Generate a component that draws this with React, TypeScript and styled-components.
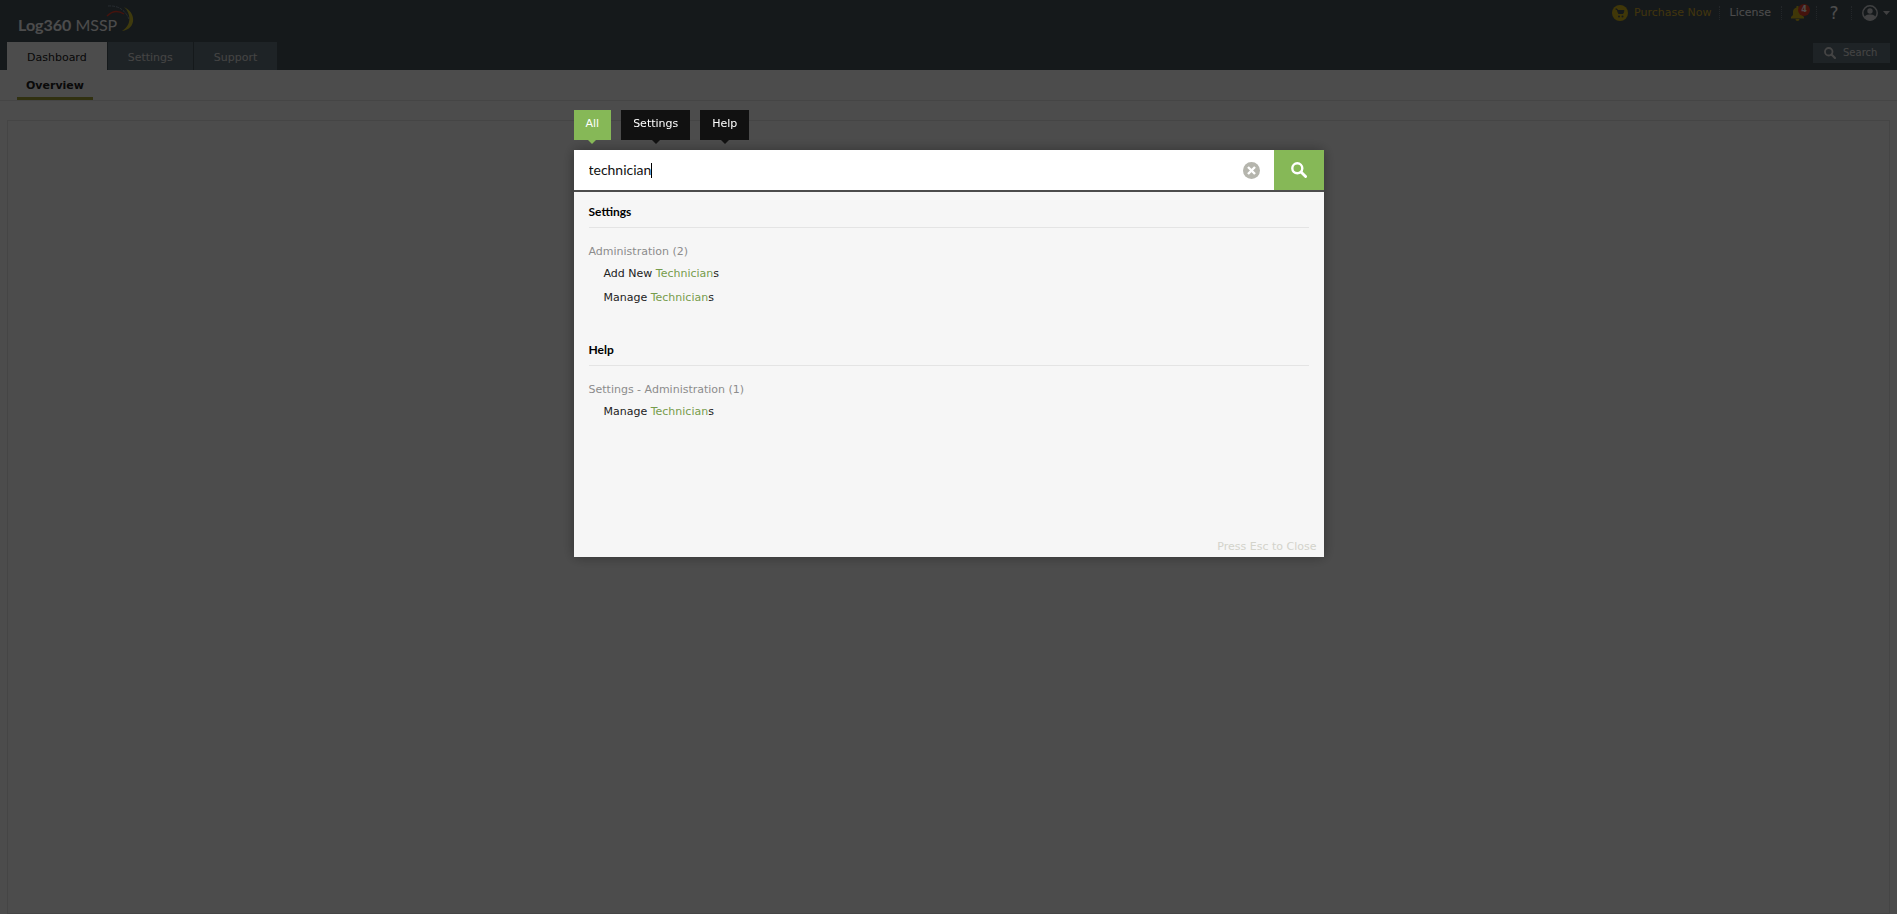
import React, { useState } from "react";
import styled, { createGlobalStyle } from "styled-components";

const GlobalStyle = createGlobalStyle`
  *, *::before, *::after { box-sizing: border-box; }
  body {
    margin: 0;
    background: #fff;
    font-family: "DejaVu Sans", Verdana, sans-serif;
    font-size: 11px;
    line-height: 16px;
    color: #333;
  }
  button, input { font: inherit; }
  a { text-decoration: none; color: inherit; }
`;

const Page = styled.div`
  min-height: 100vh;
  display: flex;
  flex-direction: column;
`;

const Header = styled.header`
  height: 70px;
  display: flex;
  justify-content: space-between;
  background: #47545c;
`;

const HeaderSide = styled.div<{ $end?: boolean }>`
  display: flex;
  flex-direction: column;
  justify-content: space-between;
  align-items: ${(p) => (p.$end ? "flex-end" : "flex-start")};
  padding: 0 7px;
`;

const Brand = styled.a`
  display: flex;
  align-items: flex-end;
  height: 35px;
  padding-left: 11px;
  font-family: Lato, sans-serif;
  font-size: 16px;
  line-height: 20px;
  color: #fff;
  white-space: pre;
`;

const BrandArc = styled.svg`
  width: 30px;
  height: 28px;
  margin: 0 0 2px -11px;
`;

const MainTabs = styled.nav`
  display: flex;
  gap: 1px;
`;

const MainTab = styled.a<{ $active?: boolean }>`
  height: 28px;
  padding: 2px 20px 0;
  line-height: 28px;
  color: ${(p) => (p.$active ? "#222" : "#e4e4e4")};
  background: ${(p) => (p.$active ? "#fff" : "#67757f")};
`;

const Utilities = styled.div`
  display: flex;
  align-items: center;
  height: 26px;
`;

const Utility = styled.button<{ $tone?: string }>`
  display: flex;
  align-items: center;
  height: 14px;
  gap: 6px;
  padding: 0 10px;
  border: 0;
  border-left: 1px dotted #75808a;
  background: none;
  color: ${(p) => p.$tone ?? "#fff"};
  &:first-child { border-left: 0; padding-right: 7px; }
  &:nth-child(3) { width: 35px; padding-left: 8px; }
  &:last-child { padding-right: 0; gap: 5px; }
`;

const BellWrap = styled.span`
  position: relative;
  display: flex;
`;

const Badge = styled.span`
  position: absolute;
  top: -2px;
  left: 8px;
  width: 12px;
  height: 12px;
  border-radius: 50%;
  background: #e8402c;
  color: #fff;
  font-size: 8px;
  line-height: 12px;
  text-align: center;
  font-weight: bold;
`;

const HelpMark = styled.span`
  width: 14px;
  font-size: 17px;
  text-align: center;
`;

const HeaderSearch = styled.button`
  display: flex;
  align-items: center;
  gap: 7px;
  width: 77px;
  height: 20px;
  margin-bottom: 7px;
  padding: 0 0 0 11px;
  border: 0;
  background: #67757f;
  color: #e4e4e4;
  font-size: 10px;
`;

const SubNav = styled.nav`
  display: flex;
  height: 31px;
  padding: 0 17px;
  border-bottom: 1px solid #e8e8e8;
`;

const SubTab = styled.a`
  height: 30px;
  padding: 2px 9px 0;
  border-bottom: 3px solid #a3a63a;
  line-height: 28px;
  font-weight: bold;
  color: #222;
`;

const Content = styled.main`
  flex: 1;
  margin: 19px 7px 0;
  border: 1px solid #e8e8e8;
`;

const Overlay = styled.div`
  position: fixed;
  inset: 0;
  padding-top: 110px;
  background: rgba(0, 0, 0, 0.7);
`;

const Dialog = styled.section`
  width: 750px;
  max-width: 100%;
  margin: 0 auto;
`;

const Scopes = styled.div`
  display: flex;
  gap: 10px;
  height: 40px;
`;

const Scope = styled.button<{ $active?: boolean }>`
  position: relative;
  height: 30px;
  padding: 0 12px 2px;
  border: 0;
  background: ${(p) => (p.$active ? "#86b857" : "#111")};
  color: #fff;
  &::after {
    content: "";
    position: absolute;
    top: 100%;
    left: 50%;
    margin-left: -4px;
    border: 4px solid transparent;
    border-bottom: 0;
    border-top-color: ${(p) => (p.$active ? "#86b857" : "#111")};
  }
`;

const Popup = styled.div`
  box-shadow: 0 0 12px rgba(0, 0, 0, 0.35);
`;

const SearchForm = styled.form`
  display: flex;
  align-items: center;
  height: 42px;
  padding-left: 15px;
  border-bottom: 2px solid #4c4c4c;
  background: #fff;
`;

const Field = styled.label`
  flex: 1;
  display: flex;
  align-items: center;
`;

const SearchInput = styled.input`
  field-sizing: content;
  max-width: 640px;
  height: 24px;
  padding: 0 0 2px;
  border: 0;
  outline: 0;
  caret-color: transparent;
  background: none;
  font-family: Lato, sans-serif;
  font-size: 14px;
  color: #111;
`;

const Caret = styled.span`
  width: 1px;
  height: 15px;
  background: #000;
`;

const ClearButton = styled.button`
  display: flex;
  padding: 0;
  margin-right: 14px;
  border: 0;
  background: none;
`;

const SubmitButton = styled.button`
  display: flex;
  align-items: center;
  justify-content: center;
  width: 50px;
  height: 40px;
  padding: 0;
  border: 0;
  background: #86b857;
`;

const Results = styled.div`
  display: flex;
  flex-direction: column;
  min-height: 365px;
  padding: 0 15px;
  background: #f6f6f6;
`;

const Group = styled.section`
  height: 138px;
`;

const GroupTitle = styled.h2`
  height: 36px;
  margin: 0 0 16px;
  padding-top: 4px;
  border-bottom: 1px solid #e4e4e4;
  font-family: Lato, sans-serif;
  font-size: 12px;
  line-height: 32px;
  color: #000;
`;

const Category = styled.h3`
  margin: 0;
  font-size: 11px;
  font-weight: normal;
  color: #8c8c8c;
`;

const ResultList = styled.ul`
  margin: 0;
  padding: 2px 0 0 15px;
  list-style: none;
`;

const ResultItem = styled.li`
  height: 24px;
  line-height: 24px;
  color: #222;
`;

const Match = styled.span`
  color: #769c4c;
`;

const CloseHint = styled.p`
  margin: auto -8px 2px auto;
  color: #d3d3cb;
`;

const SearchIcon = ({ size, color }: { size: number; color: string }) => (
  <svg width={size} height={size} viewBox="0 0 16 16" fill="none" stroke={color} aria-hidden="true">
    <circle cx="6.3" cy="6.3" r="5" strokeWidth="2.4" />
    <path d="M10 10l4.600 4.600" strokeWidth="2.8" strokeLinecap="round" />
  </svg>
);

const groups = [
  { title: "Settings", category: "Administration (2)", items: ["Add New", "Manage"] },
  { title: "Help", category: "Settings - Administration (1)", items: ["Manage"] },
];

export default function App() {
  const [query, setQuery] = useState("technician");
  const [scope, setScope] = useState("All");
  return (
    <>
      <GlobalStyle />
      <Page>
        <Header>
          <HeaderSide>
            <Brand href="#">
              <b>Log360</b> MSSP
              <BrandArc viewBox="0 0 30 28" fill="none" aria-hidden="true">
                <path d="M1 11Q9 3 18 9" stroke="#e8402c" strokeWidth="1.4" />
                <path d="M2 1Q17 0 23 14" stroke="#8595a3" strokeWidth="1" strokeDasharray="3 1" />
                <path d="M18 2C31 8 30 24 16 26C25 21 26 9 18 2Z" fill="#d2c42e" />
              </BrandArc>
            </Brand>
            <MainTabs>
              <MainTab href="#" $active>Dashboard</MainTab>
              <MainTab href="#">Settings</MainTab>
              <MainTab href="#">Support</MainTab>
            </MainTabs>
          </HeaderSide>
          <HeaderSide $end>
            <Utilities>
              <Utility $tone="#d9b02c">
                <svg width="16" height="16" viewBox="0 0 16 16" aria-hidden="true">
                  <circle cx="8" cy="8" r="8" fill="#d6b81c" />
                  <path d="M3.500 4h1.500l1.500 4.500h4.500l1-3H5.500" fill="#47545c" stroke="#47545c" />
                  <circle cx="7" cy="11.500" r="1" fill="#47545c" />
                  <circle cx="10.500" cy="11.500" r="1" fill="#47545c" />
                </svg>
                Purchase Now
              </Utility>
              <Utility>License</Utility>
              <Utility aria-label="Notifications">
                <BellWrap>
                  <svg width="15" height="15" viewBox="0 0 15 15" fill="#d6b81c" aria-hidden="true">
                    <path d="M6.500 0h2v1.500C11 2 12 4 12 6v3l2 2v1.500H1V11l2-2V6c0-2 1-4 3.500-4.500zM5.500 13h4a2 2 0 0 1-4 0z" />
                  </svg>
                  <Badge>4</Badge>
                </BellWrap>
              </Utility>
              <Utility aria-label="Help"><HelpMark>?</HelpMark></Utility>
              <Utility aria-label="Account">
                <svg width="16" height="16" viewBox="0 0 16 16" aria-hidden="true">
                  <circle cx="8" cy="8" r="7.200" fill="none" stroke="#d5d8da" strokeWidth="1.500" />
                  <circle cx="8" cy="6" r="2.700" fill="#d5d8da" />
                  <path d="M2.500 13C3 10 5 9.500 8 9.500s5 .5 5.500 3.500Q8 18 2.500 13z" fill="#d5d8da" />
                </svg>
                <svg width="7" height="4" viewBox="0 0 7 4" aria-hidden="true">
                  <path d="M0 0h7L3.500 4z" fill="#d5d8da" />
                </svg>
              </Utility>
            </Utilities>
            <HeaderSearch>
              <SearchIcon size={12} color="#e4e4e4" />
              Search
            </HeaderSearch>
          </HeaderSide>
        </Header>
        <SubNav>
          <SubTab href="#">Overview</SubTab>
        </SubNav>
        <Content />
      </Page>
      <Overlay>
        <Dialog role="dialog" aria-label="Search">
          <Scopes>
            {["All", "Settings", "Help"].map((name) => (
              <Scope key={name} $active={scope === name} onClick={() => setScope(name)}>
                {name}
              </Scope>
            ))}
          </Scopes>
          <Popup>
            <SearchForm onSubmit={(e) => e.preventDefault()}>
              <Field>
                <SearchInput aria-label="Search" value={query} onChange={(e) => setQuery(e.target.value)} />
                <Caret />
              </Field>
              <ClearButton type="button" aria-label="Clear" onClick={() => setQuery("")}>
                <svg width="17" height="17" viewBox="0 0 17 17" aria-hidden="true">
                  <circle cx="8.500" cy="8.500" r="8.500" fill="#b5b5ad" />
                  <path d="M5 5l7 7M12 5l-7 7" stroke="#fff" strokeWidth="2.400" />
                </svg>
              </ClearButton>
              <SubmitButton aria-label="Run search">
                <SearchIcon size={16} color="#fff" />
              </SubmitButton>
            </SearchForm>
            <Results>
              {groups.map((g) => (
                <Group key={g.title}>
                  <GroupTitle>{g.title}</GroupTitle>
                  <Category>{g.category}</Category>
                  <ResultList>
                    {g.items.map((item) => (
                      <ResultItem key={item}>
                        <a href="#">{item} <Match>Technician</Match>s</a>
                      </ResultItem>
                    ))}
                  </ResultList>
                </Group>
              ))}
              <CloseHint>Press Esc to Close</CloseHint>
            </Results>
          </Popup>
        </Dialog>
      </Overlay>
    </>
  );
}
